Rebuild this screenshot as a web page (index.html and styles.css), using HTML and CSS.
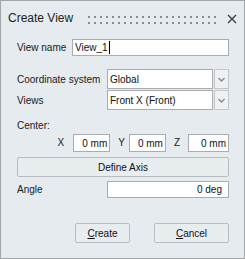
FILE: index.html
```html
<!DOCTYPE html>
<html>
<head>
<meta charset="utf-8">
<link rel="stylesheet" href="styles.css">
</head>
<body>
<div class="win">
  <div class="titlebar">
    <span class="title">Create View</span>
    <svg class="grip" width="130" height="8" viewBox="0 0 130 8">
      <defs>
        <pattern id="dots" width="6" height="6" patternUnits="userSpaceOnUse">
          <rect x="0" y="0" width="2" height="2" fill="#8c8c8c"/>
        </pattern>
      </defs>
      <rect x="0" y="0" width="130" height="8" fill="url(#dots)"/>
    </svg>
    <svg class="close" width="10" height="10" viewBox="0 0 10 10">
      <path d="M1 1 L9 9 M9 1 L1 9" stroke="#3a3a3a" stroke-width="1.3" fill="none"/>
    </svg>
  </div>
  <div class="content">
    <div class="row r-name">
      <span class="lbl lbl-name">View name</span>
      <div class="field grow">View_1<span class="caret"></span></div>
    </div>
    <div class="row r-combo r-coord">
      <span class="lbl lbl-wide">Coordinate system</span>
      <div class="combo">
        <div class="field grow">Global</div>
        <div class="drop"><svg width="7" height="5" viewBox="0 0 7 5"><path d="M0.5 1 L3.5 4 L6.5 1" stroke="#8a8a8a" stroke-width="1.4" fill="none"/></svg></div>
      </div>
    </div>
    <div class="row r-combo r-views">
      <span class="lbl lbl-wide">Views</span>
      <div class="combo">
        <div class="field grow">Front X (Front)</div>
        <div class="drop"><svg width="7" height="5" viewBox="0 0 7 5"><path d="M0.5 1 L3.5 4 L6.5 1" stroke="#8a8a8a" stroke-width="1.4" fill="none"/></svg></div>
      </div>
    </div>
    <div class="row r-center"><span class="lbl">Center:</span></div>
    <div class="row r-xyz">
      <span class="axl axl-x">X</span>
      <div class="field num w37">0 mm</div>
      <span class="axl axl-y">Y</span>
      <div class="field num w37">0 mm</div>
      <span class="axl axl-z">Z</span>
      <div class="field num w41">0 mm</div>
    </div>
    <div class="row r-axis"><div class="btn wide">Define Axis</div></div>
    <div class="row r-angle">
      <span class="lbl lbl-wide">Angle</span>
      <div class="field num grow ang">0 deg</div>
    </div>
    <div class="row r-buttons">
      <div class="btn b-create"><u>C</u>reate</div>
      <div class="btn b-cancel"><u>C</u>ancel</div>
    </div>
  </div>
</div>
</body>
</html>
```
FILE: styles.css
```css
html, body {
  margin: 0;
  padding: 0;
  background: #e5ebef;
}
.win {
  width: 245px;
  height: 259px;
  box-sizing: border-box;
  border: 1px solid #a3a6a9;
  background: #e5ebef;
  font-family: "Liberation Sans", Arial, sans-serif;
  font-size: 10px;
  color: #1a1a1a;
  overflow: hidden;
}
.titlebar {
  height: 34px;
  display: flex;
  align-items: center;
  padding-left: 7px;
  position: relative;
}
.title {
  font-size: 12px;
  color: #1e1e1e;
}
.grip {
  display: block;
  margin-left: 15px;
  margin-top: 3px;
}
.close {
  display: block;
  margin-left: 9px;
  margin-top: 1px;
}
.content {
  padding: 0 15px;
}
.row {
  display: flex;
  align-items: center;
}
.lbl {
  white-space: nowrap;
  padding-left: 1px;
}
.lbl-name { width: 55px; }
.lbl-wide { width: 90px; }
.field {
  box-sizing: border-box;
  background: #fff;
  border: 1px solid #a9adb1;
  height: 100%;
  display: flex;
  align-items: center;
  padding-left: 2px;
  white-space: nowrap;
  color: #111;
}
.grow { flex: 1; }
.caret {
  display: inline-block;
  width: 1px;
  height: 13px;
  background: #000;
  margin-left: 1px;
}
.r-name { margin-top: 4px; height: 17px; }
.r-coord { margin-top: 13px; }
.r-views { margin-top: 1px; }
.r-combo { height: 20px; }
.combo {
  flex: 1;
  display: flex;
  height: 100%;
  gap: 1px;
}
.drop {
  width: 15px;
  box-sizing: border-box;
  border: 1px solid #c3c7cb;
  background: #eef2f4;
  display: flex;
  align-items: center;
  justify-content: center;
}
.drop svg { display: block; }
.r-center { margin-top: 7px; height: 16px; }
.r-xyz {
  margin-top: 1px;
  height: 18px;
  justify-content: flex-end;
}
.num {
  justify-content: flex-end;
  padding-right: 2px;
  padding-left: 0;
}
.w37 { width: 37px; flex: none; }
.w41 { width: 41px; flex: none; }
.axl { padding-bottom: 2px; }
.axl-x { margin-right: 9px; }
.axl-y { margin-left: 8px; margin-right: 4px; }
.axl-z { margin-left: 8px; margin-right: 8px; }
.r-axis { margin-top: 5px; height: 20px; }
.btn {
  box-sizing: border-box;
  height: 100%;
  border: 1px solid #b9bdc1;
  border-radius: 2px;
  background: #e8edf0;
  display: flex;
  align-items: center;
  justify-content: center;
  color: #111;
}
.btn u { text-decoration-thickness: 1px; text-underline-offset: 1px; }
.wide { flex: 1; margin-left: 1px; }
.r-angle { margin-top: 4px; height: 17px; }
.ang { padding-right: 6px; }
.r-buttons {
  margin-top: 25px;
  height: 20px;
  justify-content: flex-end;
}
.b-create { width: 55px; margin-right: 24px; }
.b-cancel { width: 75px; }
```
